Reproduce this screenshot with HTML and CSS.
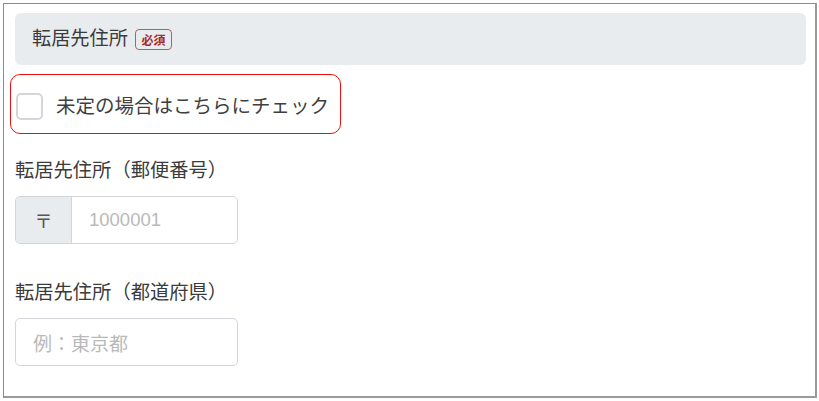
FILE: index.html
```html
<!DOCTYPE html>
<html lang="ja">
<head>
<meta charset="utf-8">
<link rel="stylesheet" href="styles.css">
</head>
<body>
<div class="frame">
  <div class="section-head">
    <span class="section-title">転居先住所</span>
    <span class="badge">必須</span>
  </div>
  <label class="undecided">
    <span class="checkbox"></span>
    <span class="undecided-text">未定の場合はこちらにチェック</span>
  </label>
  <div class="field">
    <div class="field-label">転居先住所（郵便番号）</div>
    <div class="input-group">
      <span class="prepend">〒</span>
      <span class="input-text placeholder">1000001</span>
    </div>
  </div>
  <div class="field field-pref">
    <div class="field-label">転居先住所（都道府県）</div>
    <div class="input">
      <span class="placeholder">例：東京都</span>
    </div>
  </div>
</div>
</body>
</html>
```
FILE: styles.css
```css
html, body {
  margin: 0;
  padding: 0;
  background: #ffffff;
}
body {
  font-family: "Liberation Sans", "Noto Sans CJK JP", sans-serif;
  color: #3a3a3a;
}
.frame {
  box-sizing: border-box;
  margin: 3px 0 0 3px;
  width: 814px;
  height: 395px;
  border-top: 1px solid #8c8c8c;
  border-left: 1px solid #8c8c8c;
  border-right: 2px solid #9a9a9a;
  border-bottom: 2px solid #9a9a9a;
  padding: 9px 9px 0 11px;
}
.section-head {
  height: 52px;
  background: #e9ecef;
  border-radius: 6px;
  display: flex;
  align-items: center;
  padding-left: 17px;
  gap: 7px;
}
.section-title {
  font-size: 19.2px;
  color: #3b3b3b;
  line-height: 1;
}
.badge {
  box-sizing: border-box;
  width: 37px;
  height: 21px;
  border: 1.5px solid #c25a5a;
  border-radius: 4px;
  color: #a52a2a;
  font-size: 12px;
  font-weight: bold;
  display: flex;
  align-items: center;
  justify-content: center;
  margin-top: 1px;
}
.undecided {
  box-sizing: border-box;
  margin: 9px 0 0 -5px;
  width: 331px;
  height: 60px;
  border: 1px solid #ee1111;
  border-radius: 10px;
  display: flex;
  align-items: center;
  padding: 5px 0 0 5px;
  gap: 13px;
}
.checkbox {
  box-sizing: border-box;
  width: 27px;
  height: 27px;
  border: 2px solid #d3d7dc;
  border-radius: 5px;
  background: #fff;
  flex: none;
}
.undecided-text {
  font-size: 19.5px;
  color: #3f3f3f;
  line-height: 1;
}
.field {
  margin-top: 24px;
}
.field-pref {
  margin-top: 36px;
}
.field-label {
  font-size: 19.3px;
  line-height: 26px;
  color: #3b3b3b;
  margin-bottom: 12px;
}
.input-group {
  box-sizing: border-box;
  width: 223px;
  height: 48px;
  display: flex;
  border: 1px solid #d2d6db;
  border-radius: 5px;
  overflow: hidden;
}
.prepend {
  width: 55px;
  flex: none;
  background: #e9ecef;
  border-right: 1px solid #d2d6db;
  display: flex;
  align-items: center;
  justify-content: center;
  font-size: 18px;
  color: #555;
}
.input-text {
  display: flex;
  align-items: center;
  padding-left: 17px;
}
.placeholder {
  font-size: 18.5px;
  color: #b9b9b9;
}
.input .placeholder {
  font-size: 19px;
}
.input {
  box-sizing: border-box;
  width: 223px;
  height: 48px;
  border: 1px solid #d2d6db;
  border-radius: 5px;
  display: flex;
  align-items: center;
  padding-left: 17px;
}
```
